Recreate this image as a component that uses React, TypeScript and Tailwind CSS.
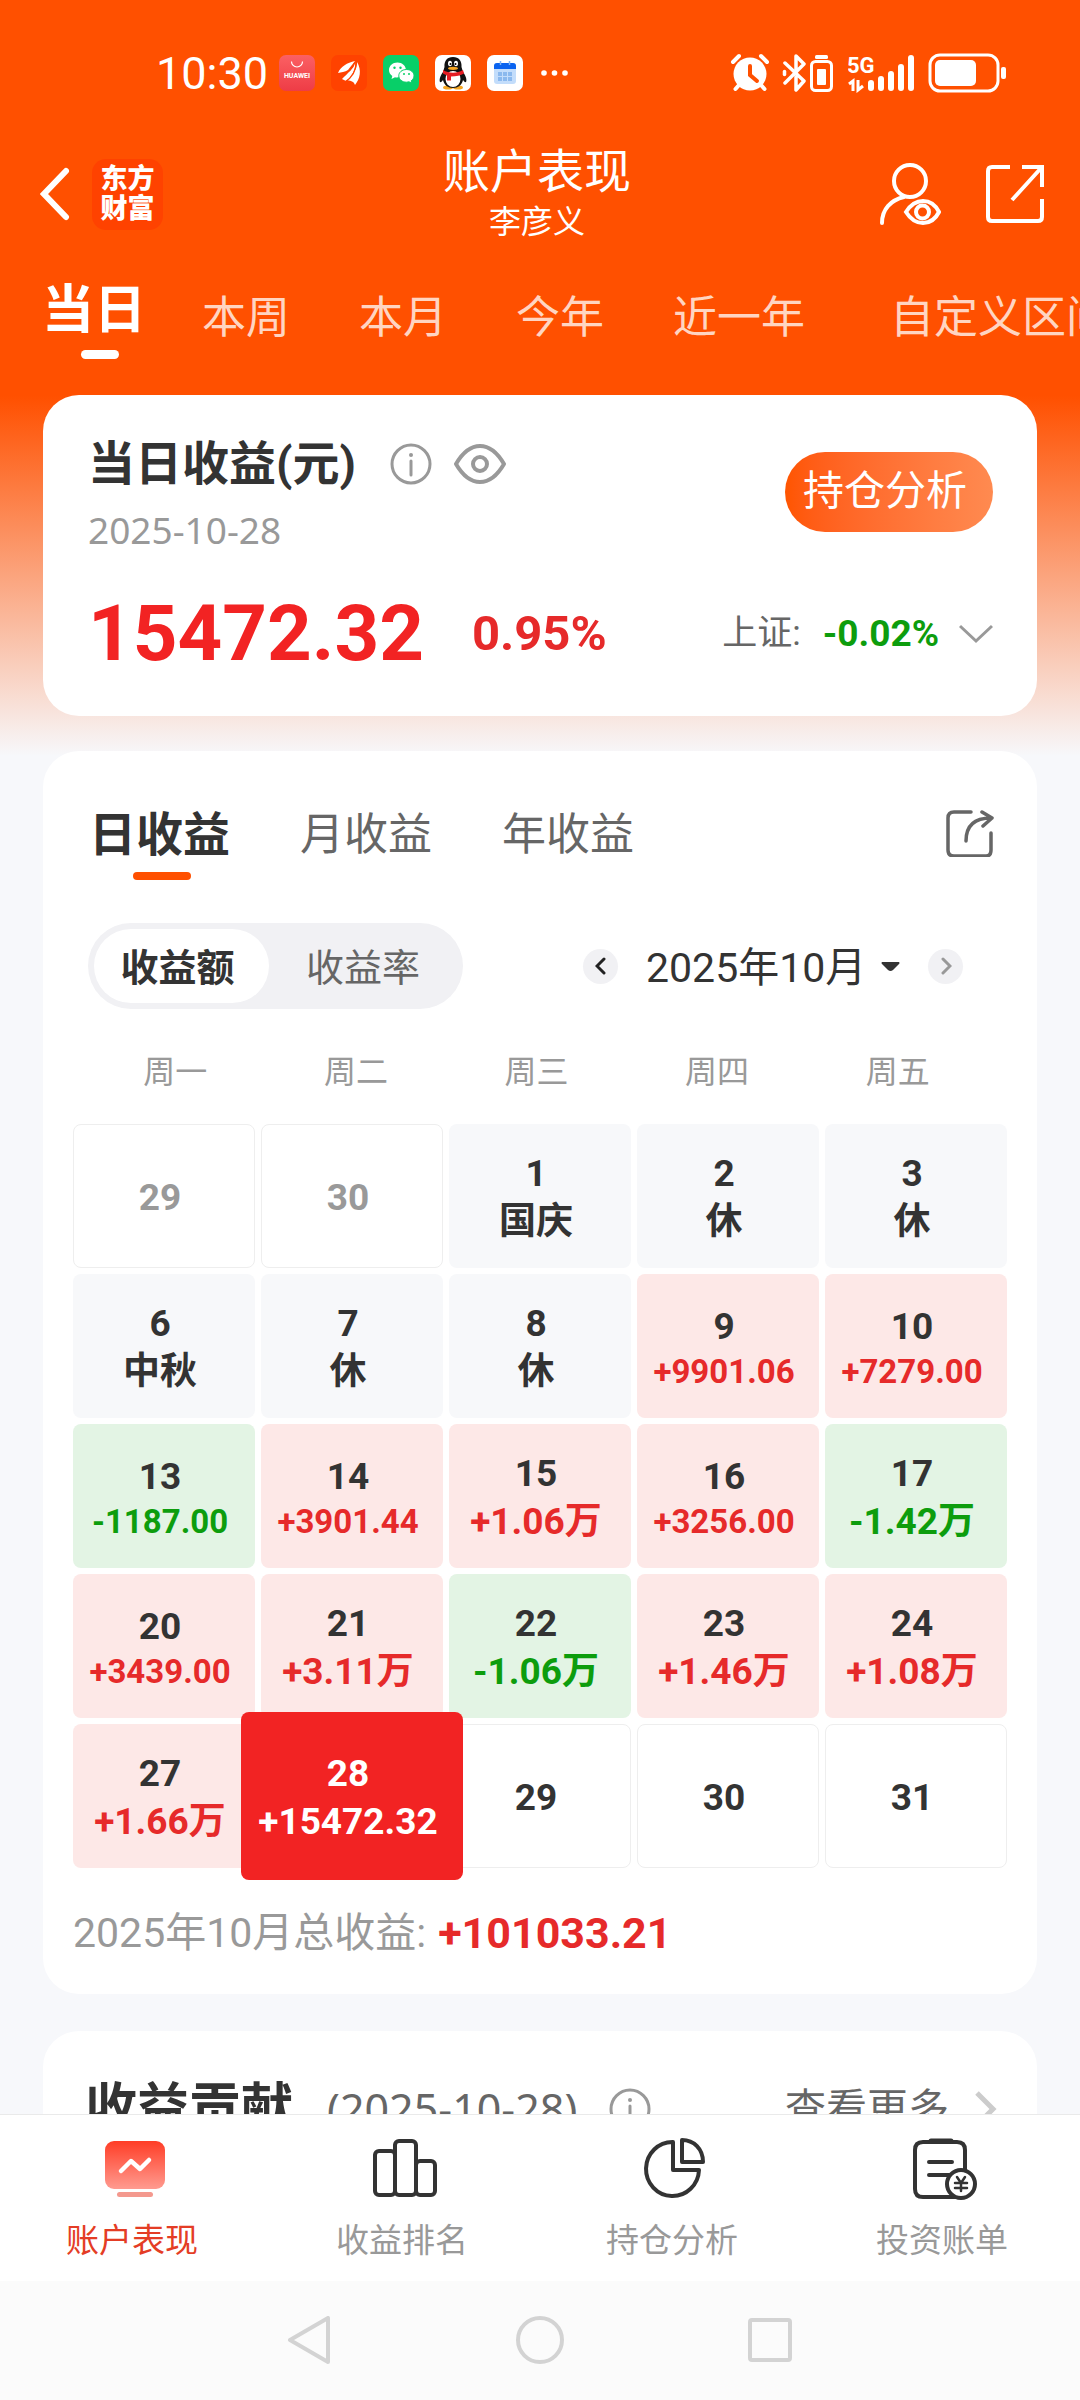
import { useState } from 'react';

type DayKind = 'outside' | 'rest' | 'up' | 'down' | 'future' | 'today';

type Day = {
  day: number;
  kind: DayKind;
  text?: string;
};

const RANGES = ['当日', '本周', '本月', '今年', '近一年', '自定义区间'];
const PERIODS = ['日收益', '月收益', '年收益'];
const WEEKDAYS = ['周一', '周二', '周三', '周四', '周五'];

const DAYS: Day[] = [
  { day: 29, kind: 'outside' },
  { day: 30, kind: 'outside' },
  { day: 1, kind: 'rest', text: '国庆' },
  { day: 2, kind: 'rest', text: '休' },
  { day: 3, kind: 'rest', text: '休' },
  { day: 6, kind: 'rest', text: '中秋' },
  { day: 7, kind: 'rest', text: '休' },
  { day: 8, kind: 'rest', text: '休' },
  { day: 9, kind: 'up', text: '+9901.06' },
  { day: 10, kind: 'up', text: '+7279.00' },
  { day: 13, kind: 'down', text: '-1187.00' },
  { day: 14, kind: 'up', text: '+3901.44' },
  { day: 15, kind: 'up', text: '+1.06万' },
  { day: 16, kind: 'up', text: '+3256.00' },
  { day: 17, kind: 'down', text: '-1.42万' },
  { day: 20, kind: 'up', text: '+3439.00' },
  { day: 21, kind: 'up', text: '+3.11万' },
  { day: 22, kind: 'down', text: '-1.06万' },
  { day: 23, kind: 'up', text: '+1.46万' },
  { day: 24, kind: 'up', text: '+1.08万' },
  { day: 27, kind: 'up', text: '+1.66万' },
  { day: 28, kind: 'today', text: '+15472.32' },
  { day: 29, kind: 'future' },
  { day: 30, kind: 'future' },
  { day: 31, kind: 'future' },
];

const CELL: Record<DayKind, string> = {
  outside: 'border border-[#eeeeee] bg-white text-[#999999]',
  future: 'border border-[#eeeeee] bg-white text-[#333333]',
  rest: 'bg-[#f7f8fa] text-[#333333]',
  up: 'bg-[#fde8e7] text-[#333333]',
  down: 'bg-[#e3f4e4] text-[#333333]',
  today: 'text-white',
};

const VALUE: Record<DayKind, string> = {
  outside: '',
  future: '',
  rest: '',
  up: 'text-[#e62a2a]',
  down: 'text-[#0d9d0d]',
  today: '',
};

function StatusBar() {
  return (
    <div className="flex h-[146px] items-center pr-[72px] pl-[156px] text-white">
      <span className="w-[123px] text-[45px] leading-none">10:30</span>
      <div className="flex items-center gap-4">
        <svg className="h-9 w-9" viewBox="0 0 36 36">
          <defs>
            <linearGradient id="hw" x1="0" y1="0" x2="0" y2="1">
              <stop offset="0" stopColor="#fb6063" />
              <stop offset="1" stopColor="#ee3c46" />
            </linearGradient>
          </defs>
          <rect width="36" height="36" rx="7" fill="url(#hw)" />
          <path d="M12.5 6.5a5.5 5.5 0 0 0 11 0" fill="none" stroke="#fff" strokeWidth="1.2" />
          <text x="18" y="23" fontSize="7" fontWeight="700" fill="#fff" textAnchor="middle">
            HUAWEI
          </text>
        </svg>
        <svg className="h-9 w-9" viewBox="0 0 36 36">
          <rect width="36" height="36" rx="7" fill="#ff4200" />
          <path d="M7 18C10 11 16 8 24 6c-3 4-5 6-7 9-3 2-7 2-10 3z" fill="#fff" />
          <path d="M11 24c6-6 12-11 13-18 1 7-2 15-9 20z" fill="#fff" />
          <path d="M16 25c6-5 10-11 10-18 5 8 3 17-2 23-1-3-3-4-8-5z" fill="#fff" />
          <path d="M9 20c8-2 13-6 15-13M14 27c8-5 11-11 11.500-20" fill="none" stroke="#ff4200" strokeWidth="1.300" />
        </svg>
        <svg className="h-9 w-9" viewBox="0 0 36 36">
          <rect width="36" height="36" rx="7" fill="#08cf68" />
          <path d="M14.500 7.500C9.500 7.500 6 11 6 15c0 2.500 1.300 4.500 3.300 6l-.8 3 3.500-1.800c4 .8 10-1 11-6.700 0-5-4-8-8.500-8z" fill="#fff" />
          <path d="M23.500 14.500c-4.500 0-7.700 2.800-7.700 6.300s3.200 6.400 7.700 6.400l2.500-.4 2.800 1.500-.6-2.500c1.800-1.300 2.800-3 2.800-5 0-3.500-3.200-6.300-7.500-6.300z" fill="#fff" stroke="#08cf68" strokeWidth="1" />
          <g fill="#08cf68">
            <circle cx="11.500" cy="12.800" r="1.200" />
            <circle cx="17.500" cy="12.800" r="1.200" />
            <circle cx="21" cy="19" r="1" />
            <circle cx="26" cy="19" r="1" />
          </g>
        </svg>
        <svg className="h-9 w-9" viewBox="0 0 36 36">
          <rect width="36" height="36" rx="7" fill="#fff" />
          <ellipse cx="13" cy="32.500" rx="5" ry="2" fill="#f5a623" />
          <ellipse cx="23" cy="32.500" rx="5" ry="2" fill="#f5a623" />
          <path d="M18 2c-6 0-9 4-8.500 10L8 17c-3 4-4 8-3 10 1 .5 2-.500 3-2 1 5 5 8 10 8s9-3 10-8c1 1.500 2 2.500 3 2 1-2 0-6-3-10l-1.500-5C27 6 24 2 18 2z" fill="#111" />
          <ellipse cx="18" cy="24" rx="7.500" ry="8" fill="#fff" />
          <path d="M8 15c6 3.500 14 3.500 20 0l1 3.500c-3 2-8 3-13 3v4h-4v-5l-4-2z" fill="#e51c23" />
          <ellipse cx="15" cy="8.500" rx="2" ry="2.800" fill="#fff" />
          <ellipse cx="21" cy="8.500" rx="2" ry="2.800" fill="#fff" />
          <circle cx="15.500" cy="9" r="1" />
          <circle cx="20.500" cy="9" r="1" />
          <ellipse cx="18" cy="13.300" rx="5" ry="1.600" fill="#f5a623" />
        </svg>
        <svg className="h-9 w-9" viewBox="0 0 36 36">
          <rect width="36" height="36" rx="7" fill="#fff" />
          <rect x="7" y="8" width="22" height="21" rx="3" fill="#c3ddfb" />
          <path d="M7 14v-3a3 3 0 0 1 3-3h16a3 3 0 0 1 3 3v3z" fill="#0a63f0" />
          <path d="M13.500 6v4M22.500 6v4" stroke="#7db3f8" strokeWidth="1.500" />
          <g fill="#8bb9ee">
            <path d="M11 17h4v4h-4zM16 17h4v4h-4zM21 17h4v4h-4zM11 22h4v4h-4zM16 22h4v4h-4zM21 22h4v4h-4z" />
          </g>
        </svg>
        <svg className="h-9 w-[30px]" viewBox="0 0 30 36" fill="#fff">
          <circle cx="5" cy="18" r="2.800" />
          <circle cx="15.500" cy="18" r="2.800" />
          <circle cx="26" cy="18" r="2.800" />
        </svg>
      </div>
      <div className="ml-auto flex items-center">
        <svg className="mr-3 h-10 w-10" viewBox="0 0 40 40" fill="none" strokeLinecap="round">
          <circle cx="20" cy="21" r="16.500" fill="#fff" />
          <path d="M20 13v9l7 6" stroke="#ff5000" strokeWidth="4" />
          <path d="M3 9l6-6M37 9l-6-6M9 32l-3.500 4M31 32l3.500 4" stroke="#fff" strokeWidth="4" />
        </svg>
        <svg className="mr-1 h-10 w-6" viewBox="0 0 24 40" fill="none" stroke="#fff" strokeWidth="3.500" strokeLinejoin="round" strokeLinecap="round">
          <path d="M3 10l19 18-8 9V24M14 16V3l8 8L3 30" />
          <path d="M2.500 18.500v3" />
        </svg>
        <svg className="mr-[14px] h-10 w-6" viewBox="0 0 24 40" fill="none">
          <rect x="1.500" y="8.500" width="20" height="29" rx="4" stroke="#fff" strokeWidth="3" />
          <rect x="5" y="2" width="13" height="4" rx="1.500" fill="#fff" />
          <rect x="7" y="16" width="9" height="16" rx="1" fill="#fff" />
        </svg>
        <svg className="mr-[14px] h-10 w-[66px]" viewBox="0 0 66 40">
          <text x="-1" y="20" fontSize="22" fontWeight="700" fill="#fff">5G</text>
          <path d="M1 31l4-3v10M10 27v10l5-4" fill="none" stroke="#fff" strokeWidth="3" />
          <g stroke="#fff" strokeWidth="6" strokeLinecap="round">
            <path d="M23 30v5M33 26v9M43 21v14M53 14v21M63 5v30" />
          </g>
        </svg>
        <svg className="h-10 w-20" viewBox="0 0 80 40" fill="none">
          <rect x="2" y="2" width="68" height="36" rx="10" stroke="#fff" strokeWidth="3" />
          <rect x="7" y="7" width="41" height="26" rx="5" fill="#fff" />
          <rect x="73" y="14" width="5" height="12" rx="2" fill="#fff" />
        </svg>
      </div>
    </div>
  );
}

function InfoIcon() {
  return (
    <svg className="h-[42px] w-[42px]" viewBox="0 0 42 42" fill="none" stroke="#999" strokeWidth="3">
      <circle cx="21" cy="21" r="19" />
      <path d="M21 18v14" strokeLinecap="round" />
      <circle cx="21" cy="12" r="2" fill="#999" stroke="none" />
    </svg>
  );
}

function Header() {
  return (
    <header className="flex h-24 items-center justify-between pr-9 pl-10 text-white">
      <div className="flex flex-1 items-center gap-[22px]">
        <button aria-label="返回">
          <svg className="h-[54px] w-[30px]" viewBox="0 0 30 54" fill="none" stroke="#fff" strokeWidth="6" strokeLinecap="round">
            <path d="M26 4L4 27l22 23" />
          </svg>
        </button>
        <div className="flex h-[71px] w-[71px] flex-col items-center justify-center rounded-[14px] bg-[#ff4200] text-[27px] leading-[30px] font-black">
          <span>东方</span>
          <span>财富</span>
        </div>
      </div>
      <div className="pr-[10px] text-center">
        <h1 className="text-[47px] leading-[56px]">账户表现</h1>
        <p className="text-[32px] leading-[44px]">李彦义</p>
      </div>
      <div className="flex flex-1 items-center justify-end gap-[45px]">
        <button aria-label="查看账户">
          <svg className="h-[62px] w-[62px]" viewBox="0 0 62 62" fill="none" stroke="#fff" strokeWidth="4" strokeLinecap="round">
            <circle cx="31" cy="18" r="16" />
            <path d="M25 34C12 37 3 46 3 60" />
            <path d="M27 49c5-8 11-11 17-11s12 3 16 11c-4 8-10 11-16 11s-12-3-17-11z" />
            <circle cx="43.500" cy="49" r="6.500" />
          </svg>
        </button>
        <button aria-label="分享">
          <svg className="h-[60px] w-[58px]" viewBox="0 0 58 60" fill="none" stroke="#fff" strokeWidth="4">
            <path d="M24 3H6q-4 0-4 4v46q0 4 4 4h46q4 0 4-4V35" />
            <path d="M36 3h20v20M56 3L26 36" />
          </svg>
        </button>
      </div>
    </header>
  );
}

function SummaryCard() {
  return (
    <section className="mx-[43px] rounded-[36px] bg-white pt-[41px] pr-[44px] pb-[42px] pl-[45px]">
      <div className="flex items-start justify-between">
        <div>
          <div className="flex items-center">
            <h2 className="text-[47px] leading-[56px] font-bold text-[#333333]">当日收益(元)</h2>
            <button aria-label="说明" className="ml-[34px]">
              <InfoIcon />
            </button>
            <button aria-label="隐藏金额" className="ml-[22px]">
              <svg className="h-10 w-[52px]" viewBox="0 0 52 40" fill="none" stroke="#999" strokeWidth="4" strokeLinejoin="round">
                <path d="M2 20C9 8 17 2 26 2s17 6 24 18c-7 12-15 18-24 18S9 32 2 20z" />
                <circle cx="26" cy="20" r="7" />
              </svg>
            </button>
          </div>
          <p className="mt-[14px] text-[37px] leading-[48px] text-[#999999] [font-family:'Noto_Sans',sans-serif]">2025-10-28</p>
        </div>
        <button className="mt-4 h-20 w-[208px] rounded-full bg-linear-to-r from-[#ff5500] to-[#ff8a50] pr-2 text-[41px] text-white">
          持仓分析
        </button>
      </div>
      <div className="mt-10 flex items-center leading-[80px]">
        <span className="text-[78px] font-bold text-[#f22323]">15472.32</span>
        <span className="ml-12 text-[49px] font-bold text-[#e62a2a]">0.95%</span>
        <button className="ml-auto flex items-center">
          <span className="text-[35px] text-[#666666]">上证:</span>
          <span className="ml-[22px] text-[37px] font-bold text-[#0d9d0d]">-0.02%</span>
          <svg className="ml-5 h-5 w-[34px]" viewBox="0 0 34 20" fill="none" stroke="#999" strokeWidth="3">
            <path d="M1 2l16 15L33 2" />
          </svg>
        </button>
      </div>
    </section>
  );
}

function DayCell({ day, kind, text }: Day) {
  const today = kind === 'today';
  const long = !today && !!text && text.length > 6;
  return (
    <button className={`relative flex h-36 flex-col items-center justify-center rounded-lg pt-1 pr-2 text-[37px] leading-[48px] font-bold whitespace-nowrap ${CELL[kind]}`}>
      {today && <span className="absolute -inset-x-5 -inset-y-3 z-10 rounded-lg bg-[#f22323]" />}
      <span className="relative z-10">{day}</span>
      {text && (
        <span className={`relative z-10 ${VALUE[kind]} ${long ? 'text-[33px] leading-[42px]' : ''}`}>{text}</span>
      )}
    </button>
  );
}

function CalendarCard() {
  const [period, setPeriod] = useState('日收益');
  const [mode, setMode] = useState('收益额');

  return (
    <section className="mx-[43px] mt-[35px] rounded-[36px] bg-white px-[30px] pt-[54px] pb-[34px]">
      <div className="flex items-start pr-[13px] pl-4">
        {PERIODS.map((p) => (
          <button key={p} onClick={() => setPeriod(p)} className="mr-[70px] flex flex-col items-center">
            {p === period ? (
              <>
                <span className="text-[47px] leading-[60px] font-bold text-[#333333]">{p}</span>
                <span className="mt-[7px] ml-1 h-2 w-[58px] rounded-full bg-[#ff5000]" />
              </>
            ) : (
              <span className="text-[44px] leading-[60px] text-[#666666]">{p}</span>
            )}
          </button>
        ))}
        <button aria-label="分享收益" className="mt-1 ml-auto">
          <svg className="h-12 w-12" viewBox="0 0 48 48" fill="none" stroke="#666" strokeWidth="3.500" strokeLinecap="round" strokeLinejoin="round">
            <path d="M25 3H8q-6 0-6 6v32q0 6 6 6h32q5 0 5-6V24" />
            <path d="M20 32C20 18 27 9 45 9M36 3l10 6-9 8" />
          </svg>
        </button>
      </div>

      <div className="mt-[43px] flex items-center justify-between pr-[44px] pl-[15px]">
        <div className="flex h-[86px] w-[375px] rounded-full bg-[#f1f1f4] p-[6px] text-[38px]">
          {['收益额', '收益率'].map((m) => (
            <button
              key={m}
              onClick={() => setMode(m)}
              className={
                m === mode
                  ? 'w-[175px] rounded-full bg-white pt-1 pr-2 font-bold text-[#333333]'
                  : 'flex-1 rounded-full pt-1 text-[#666666]'
              }
            >
              {m}
            </button>
          ))}
        </div>
        <div className="flex items-center">
          <button aria-label="上个月" className="flex h-[35px] w-[35px] items-center justify-center rounded-full bg-[#f1f1f4]">
            <svg className="h-[18px] w-3" viewBox="0 0 12 18" fill="none" stroke="#222" strokeWidth="3" strokeLinecap="round">
              <path d="M9 2L2 9l7 7" />
            </svg>
          </button>
          <label className="ml-7 flex items-center">
            <select aria-label="月份" className="appearance-none bg-transparent pt-1 text-[41px] leading-[48px] text-[#333333]">
              <option>2025年10月</option>
            </select>
            <svg className="ml-[14px] h-[9px] w-[19px]" viewBox="0 0 19 9" fill="#333">
              <path d="M1 0h17q1 1 0 2l-6 6q-2.500 2-5 0L1 2Q0 1 1 0z" />
            </svg>
          </label>
          <button aria-label="下个月" className="ml-7 flex h-[35px] w-[35px] items-center justify-center rounded-full bg-[#f1f1f4]">
            <svg className="h-[18px] w-3" viewBox="0 0 12 18" fill="none" stroke="#999" strokeWidth="3" strokeLinecap="round">
              <path d="M3 2l7 7-7 7" />
            </svg>
          </button>
        </div>
      </div>

      <div className="mt-[39px] grid grid-cols-5 pr-[19px] pl-3 text-center text-[32px] leading-[48px] text-[#999999]">
        {WEEKDAYS.map((w) => (
          <span key={w}>{w}</span>
        ))}
      </div>

      <div className="mt-7 grid grid-cols-5 gap-[6px]">
        {DAYS.map((d, i) => (
          <DayCell key={i} {...d} />
        ))}
      </div>

      <p className="mt-[38px] flex items-center gap-3 leading-[54px]">
        <span className="text-[41px] text-[#999999]">2025年10月总收益:</span>
        <span className="text-[43px] font-bold text-[#e62a2a]">+101033.21</span>
      </p>
    </section>
  );
}

function ContributionCard() {
  return (
    <section className="mx-[43px] mt-[37px] flex items-center rounded-t-[36px] bg-white pt-[46px] pr-[40px] pb-10 pl-[42px] leading-[64px] whitespace-nowrap">
      <h2 className="text-[52px] font-bold text-[#333333]">收益贡献</h2>
      <span className="ml-[34px] text-[43px] text-[#666666] [font-family:'Noto_Sans',sans-serif]">(2025-10-28)</span>
      <button aria-label="说明" className="ml-8">
        <InfoIcon />
      </button>
      <a href="#more" className="ml-auto flex items-center text-[41px] text-[#666666]">
        查看更多
        <svg className="ml-[26px] h-9 w-[22px]" viewBox="0 0 22 36" fill="none" stroke="#ccc" strokeWidth="5">
          <path d="M2 2l16 16L2 34" />
        </svg>
      </a>
    </section>
  );
}

function NavIcon({ name }: { name: string }) {
  const line = { fill: 'none', stroke: '#333', strokeWidth: 4, strokeLinejoin: 'round' as const, strokeLinecap: 'round' as const };
  if (name === '账户表现') {
    return (
      <svg className="h-16 w-[68px]" viewBox="0 0 68 64">
        <defs>
          <linearGradient id="perf" x1="0" y1="0" x2="0" y2="1">
            <stop offset="0" stopColor="#ff3d26" />
            <stop offset="1" stopColor="#ff9b90" />
          </linearGradient>
        </defs>
        <rect x="4" y="4" width="60" height="48" rx="9" fill="url(#perf)" />
        <path d="M20 34l10-10 9 8 9-9" fill="none" stroke="#fff" strokeWidth="4.500" strokeLinecap="round" strokeLinejoin="round" />
        <rect x="16" y="55" width="36" height="5" rx="2.500" fill="#f4998e" />
      </svg>
    );
  }
  if (name === '收益排名') {
    return (
      <svg className="h-16 w-[68px]" viewBox="0 0 68 64" {...line}>
        <rect x="4" y="14" width="20" height="44" rx="4" />
        <rect x="24" y="4" width="21" height="54" rx="4" />
        <rect x="45" y="24" width="19" height="34" rx="4" />
      </svg>
    );
  }
  if (name === '持仓分析') {
    return (
      <svg className="h-16 w-[68px]" viewBox="0 0 68 64" {...line}>
        <path d="M32 5v28h26a26.500 27 0 1 1-26-28z" />
        <path d="M41 3v22h21C62 12 53 3 41 3z" />
      </svg>
    );
  }
  return (
    <svg className="h-16 w-[68px]" viewBox="0 0 68 64" {...line}>
      <path d="M46 60H12q-8 0-8-8V13q0-8 8-8h34q8 0 8 8v20" />
      <path d="M20 4h20" strokeWidth="5" />
      <path d="M18 25h23M18 38h20" />
      <circle cx="50" cy="47" r="14" fill="#fff" />
      <path d="M46 40l4 6 4-6M50 46v8M44 46h12M44 51h12" strokeWidth="2.500" />
    </svg>
  );
}

function BottomNav() {
  return (
    <nav className="grid h-[167px] shrink-0 grid-cols-4 border-t border-[#eaeaea] bg-white">
      {['账户表现', '收益排名', '持仓分析', '投资账单'].map((name, i) => (
        <a key={name} href="#nav" className="flex flex-col items-center pt-[22px]">
          <NavIcon name={name} />
          <span className={`mt-4 pr-[6px] text-[33px] leading-[48px] ${i === 0 ? 'text-[#e43d25]' : 'text-[#999999]'}`}>{name}</span>
        </a>
      ))}
    </nav>
  );
}

function SystemNav() {
  return (
    <div className="flex h-[119px] shrink-0 items-center justify-center gap-[183px] bg-[#fbfbfb]">
      <button aria-label="系统返回">
        <svg className="h-[50px] w-[50px]" viewBox="0 0 50 50" fill="none" stroke="#d3d3d3" strokeWidth="4" strokeLinejoin="round">
          <path d="M46 2v44L8 24z" />
        </svg>
      </button>
      <button aria-label="主屏幕">
        <svg className="h-[50px] w-[50px]" viewBox="0 0 50 50" fill="none" stroke="#d3d3d3" strokeWidth="4">
          <circle cx="25" cy="24" r="22" />
        </svg>
      </button>
      <button aria-label="最近任务">
        <svg className="h-[50px] w-[50px]" viewBox="0 0 50 50" fill="none" stroke="#d3d3d3" strokeWidth="4" strokeLinejoin="round">
          <rect x="2" y="4" width="40" height="40" rx="2" />
        </svg>
      </button>
    </div>
  );
}

export default function App() {
  const [range, setRange] = useState('当日');

  return (
    <div className="flex h-screen flex-col [font-family:Roboto,'Noto_Sans_CJK_SC',sans-serif]">
      <main className="min-h-0 flex-1 overflow-hidden bg-[#f7f8fb] bg-[linear-gradient(to_bottom,#ff5000_396px,#f7f8fb_756px)]">
        <StatusBar />
        <Header />
        <div className="flex items-start overflow-hidden pt-10 pb-9 pl-[42px] whitespace-nowrap text-white">
          {RANGES.map((r) =>
            r === range ? (
              <button key={r} onClick={() => setRange(r)} className="mr-14 flex flex-col items-center">
                <span className="text-[52px] leading-[58px] font-bold">{r}</span>
                <span className="mt-[10px] ml-3 h-[9px] w-[38px] rounded-full bg-white" />
              </button>
            ) : (
              <button key={r} onClick={() => setRange(r)} className="mr-[69px] text-[44px] leading-[72px] text-[#ffd5c2] last:pl-4">
                {r}
              </button>
            )
          )}
        </div>
        <SummaryCard />
        <CalendarCard />
        <ContributionCard />
      </main>
      <BottomNav />
      <SystemNav />
    </div>
  );
}
